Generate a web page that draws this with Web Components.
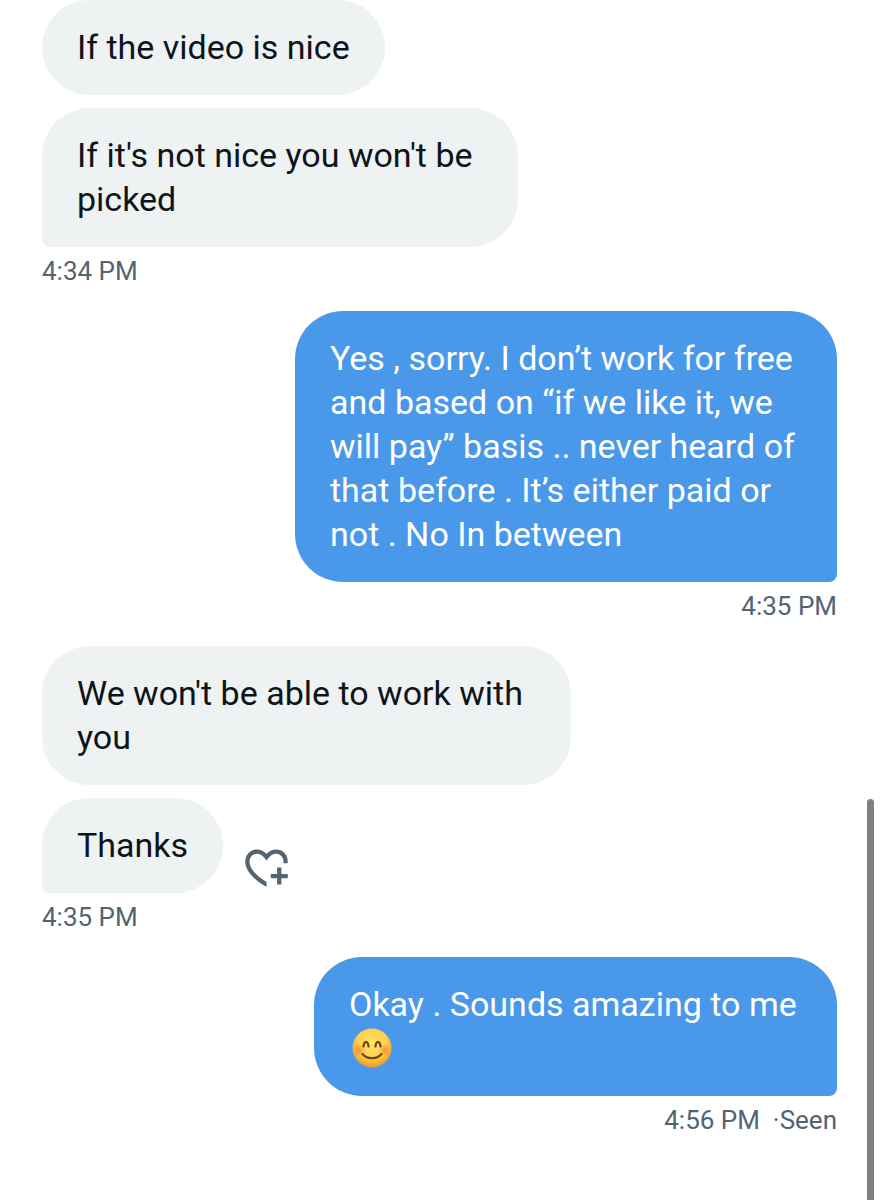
<!DOCTYPE html>
<html lang="en">
<head>
<meta charset="utf-8">
<meta name="viewport" content="width=device-width, initial-scale=1">
<title>Messages</title>
<style>
  body {
    margin: 0;
    background: #fff;
    font-family: Roboto, "Liberation Sans", sans-serif;
  }
</style>
</head>
<body>
<chat-thread>
  <message-group time="4:34 PM">
    <message-bubble>If the video is nice</message-bubble>
    <message-bubble tail style="--max: 476px">If it's not nice you won't be picked</message-bubble>
  </message-group>
  <message-group sent time="4:35 PM">
    <message-bubble sent tail style="--max: 542px">Yes , sorry. I don’t work for free and based on “if we like it, we will pay” basis .. never heard of that before . It’s either paid or not . No In between</message-bubble>
  </message-group>
  <message-group time="4:35 PM">
    <message-bubble style="--max: 529px">We won't be able to work with you</message-bubble>
    <message-bubble tail>Thanks<react-button slot="action"></react-button></message-bubble>
  </message-group>
  <message-group sent time="4:56 PM" status="Seen">
    <message-bubble sent tail style="--max: 523px">Okay . Sounds amazing to me <smile-emoji></smile-emoji></message-bubble>
  </message-group>
</chat-thread>

<script>
class ChatThread extends HTMLElement {
  constructor () {
    super()
    this.attachShadow({ mode: 'open' }).innerHTML = `
      <style>
        :host {
          display: block;
          position: relative;
          min-height: 100vh;
          overflow: hidden;
        }

        main {
          display: flex;
          flex-direction: column;
          gap: 24px;
          padding: 0 43px 24px 42px;
        }

        .scrollbar {
          position: absolute;
          top: 799px;
          right: 6px;
          bottom: -6px;
          width: 7px;
          border-radius: 4px;
          background: #808080;
        }
      </style>
      <main><slot></slot></main>
      <div class="scrollbar"></div>
    `
  }
}
customElements.define('chat-thread', ChatThread)

class MessageGroup extends HTMLElement {
  connectedCallback () {
    const status = this.getAttribute('status')
    this.attachShadow({ mode: 'open' }).innerHTML = `
      <style>
        :host {
          display: flex;
          flex-direction: column;
          align-items: flex-start;
          gap: 13px;
        }

        :host([sent]) {
          align-items: flex-end;
        }

        footer {
          margin-top: -5px;
          color: #536471;
          font-size: 26px;
          line-height: 32px;
          white-space: pre;
        }
      </style>
      <slot></slot>
      <footer><time>${this.getAttribute('time')}</time>${status ? `  ·${status}` : ''}</footer>
    `
  }
}
customElements.define('message-group', MessageGroup)

class MessageBubble extends HTMLElement {
  constructor () {
    super()
    this.attachShadow({ mode: 'open' }).innerHTML = `
      <style>
        :host {
          display: flex;
          align-items: flex-end;
          gap: 18px;
        }

        .bubble {
          box-sizing: border-box;
          max-width: var(--max, 542px);
          padding: 25px 35px 26px;
          border-radius: 48px;
          background: #eef2f3;
          color: #0f1419;
          font-size: 34px;
          line-height: 44px;
        }

        :host([tail]) .bubble {
          border-bottom-left-radius: 8px;
        }

        :host([sent]) .bubble {
          background: #4a98e9;
          color: #fff;
        }

        :host([sent][tail]) .bubble {
          border-bottom-left-radius: 48px;
          border-bottom-right-radius: 8px;
        }
      </style>
      <div class="bubble"><slot></slot></div>
      <slot name="action"></slot>
    `
  }
}
customElements.define('message-bubble', MessageBubble)

class ReactButton extends HTMLElement {
  constructor () {
    super()
    this.attachShadow({ mode: 'open' }).innerHTML = `
      <style>
        :host {
          display: block;
        }

        button {
          display: block;
          padding: 0;
          border: 0;
          background: none;
          color: #536471;
          cursor: pointer;
        }

        svg {
          display: block;
          width: 51px;
          height: 51px;
          fill: currentColor;
        }
      </style>
      <button type="button" aria-label="Add reaction">
        <svg viewBox="0 0 24 24" aria-hidden="true">
          <path d="M17 12v3h-2.998v2h3v3h2v-3h3v-2h-3.001v-3H17zm-5 6.839c-3.871-2.34-6.053-4.639-7.127-6.609-1.112-2.04-1.031-3.7-.479-4.82.561-1.13 1.667-1.84 2.91-1.91 1.222-.06 2.68.51 3.892 2.16l.806 1.09.805-1.09c1.211-1.65 2.668-2.22 3.89-2.16 1.242.07 2.347.78 2.908 1.91.334.677.49 1.554.321 2.59h2.011c.153-1.283-.039-2.469-.539-3.48-.887-1.79-2.647-2.91-4.601-3.01-1.65-.09-3.367.56-4.796 2.01-1.43-1.45-3.147-2.1-4.798-2.01-1.954.1-3.714 1.22-4.601 3.01-.896 1.81-.846 4.17.514 6.67 1.353 2.48 4.003 5.12 8.382 7.67l.502.299v-2.32z"/>
        </svg>
      </button>
    `
  }
}
customElements.define('react-button', ReactButton)

class SmileEmoji extends HTMLElement {
  constructor () {
    super()
    this.attachShadow({ mode: 'open' }).innerHTML = `
      <style>
        :host {
          display: inline-flex;
          align-items: center;
          justify-content: center;
          width: 46px;
          height: 44px;
          vertical-align: top;
        }

        svg {
          width: 40px;
          height: 40px;
        }
      </style>
      <svg viewBox="0 0 40 40" role="img" aria-label="😊">
        <defs>
          <radialGradient id="face" cx="50%" cy="38%" r="62%">
            <stop offset="0" stop-color="#ffe667"/>
            <stop offset=".6" stop-color="#fdd04b"/>
            <stop offset="1" stop-color="#e99a2c"/>
          </radialGradient>
          <radialGradient id="blush">
            <stop offset="0" stop-color="#f58235" stop-opacity=".75"/>
            <stop offset="1" stop-color="#f58235" stop-opacity="0"/>
          </radialGradient>
        </defs>
        <circle cx="20" cy="20" r="19.5" fill="url(#face)"/>
        <circle cx="7" cy="22" r="6.5" fill="url(#blush)"/>
        <circle cx="33" cy="22" r="6.5" fill="url(#blush)"/>
        <g fill="none" stroke="#69401a" stroke-linecap="round">
          <path stroke-width="2.2" d="M11.5 18.5c.6-6 4.4-6 5 0M23.5 18.5c.6-6 4.4-6 5 0"/>
          <path stroke-width="2" d="M10.5 26c4.8 5.6 14.2 5.6 19 0"/>
        </g>
      </svg>
    `
  }
}
customElements.define('smile-emoji', SmileEmoji)
</script>
</body>
</html>
